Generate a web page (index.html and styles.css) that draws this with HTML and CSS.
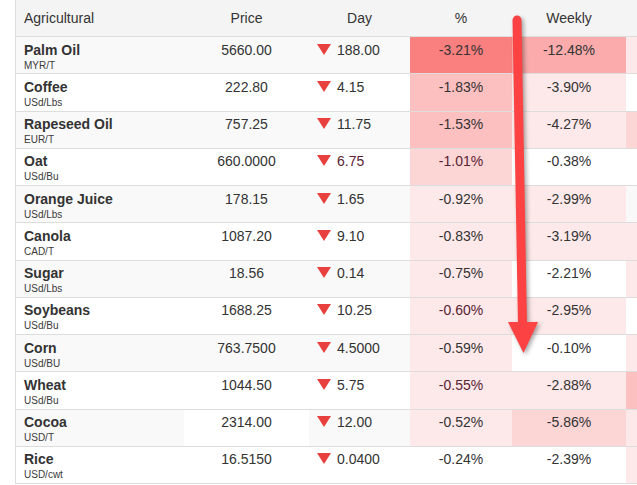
FILE: index.html
```html
<!DOCTYPE html>
<html lang="en">
<head>
<meta charset="utf-8">
<title>Agricultural</title>
<link rel="stylesheet" href="styles.css">
</head>
<body>
<div class="page">
  <div class="wrap">
    <table class="quotes">
      <colgroup>
        <col class="c-name"><col class="c-price"><col class="c-day"><col class="c-pct"><col class="c-week"><col class="c-month">
      </colgroup>
      <thead>
        <tr><th class="name">Agricultural</th><th>Price</th><th>Day</th><th>%</th><th>Weekly</th><th></th></tr>
      </thead>
      <tbody>
        <tr class="odd"><td class="name"><b>Palm Oil</b><span class="unit">MYR/T</span></td><td class="num">5660.00</td><td class="day"><i class="down"></i>188.00</td><td class="num h1">-3.21%</td><td class="num h2">-12.48%</td><td class="h5"></td></tr>
        <tr><td class="name"><b>Coffee</b><span class="unit">USd/Lbs</span></td><td class="num">222.80</td><td class="day"><i class="down"></i>4.15</td><td class="num h3">-1.83%</td><td class="num h5">-3.90%</td><td></td></tr>
        <tr class="odd"><td class="name"><b>Rapeseed Oil</b><span class="unit">EUR/T</span></td><td class="num">757.25</td><td class="day"><i class="down"></i>11.75</td><td class="num h3">-1.53%</td><td class="num h5">-4.27%</td><td class="h4"></td></tr>
        <tr><td class="name"><b>Oat</b><span class="unit">USd/Bu</span></td><td class="num">660.0000</td><td class="day dk"><i class="down"></i>6.75</td><td class="num h4 dk">-1.01%</td><td class="num">-0.38%</td><td></td></tr>
        <tr class="odd"><td class="name"><b>Orange Juice</b><span class="unit">USd/Lbs</span></td><td class="num">178.15</td><td class="day"><i class="down"></i>1.65</td><td class="num h5">-0.92%</td><td class="num h5">-2.99%</td><td></td></tr>
        <tr><td class="name"><b>Canola</b><span class="unit">CAD/T</span></td><td class="num">1087.20</td><td class="day"><i class="down"></i>9.10</td><td class="num h5">-0.83%</td><td class="num h5">-3.19%</td><td class="h5"></td></tr>
        <tr class="odd"><td class="name"><b>Sugar</b><span class="unit">USd/Lbs</span></td><td class="num">18.56</td><td class="day"><i class="down"></i>0.14</td><td class="num h5">-0.75%</td><td class="num plain">-2.21%</td><td class="h5"></td></tr>
        <tr><td class="name"><b>Soybeans</b><span class="unit">USd/Bu</span></td><td class="num">1688.25</td><td class="day"><i class="down"></i>10.25</td><td class="num h5 dk">-0.60%</td><td class="num h5">-2.95%</td><td></td></tr>
        <tr class="odd"><td class="name"><b>Corn</b><span class="unit">USd/BU</span></td><td class="num">763.7500</td><td class="day"><i class="down"></i>4.5000</td><td class="num h5">-0.59%</td><td class="num plain">-0.10%</td><td class="h5"></td></tr>
        <tr><td class="name"><b>Wheat</b><span class="unit">USd/Bu</span></td><td class="num">1044.50</td><td class="day"><i class="down"></i>5.75</td><td class="num h5 dk">-0.55%</td><td class="num h5">-2.88%</td><td class="h3"></td></tr>
        <tr class="odd"><td class="name"><b>Cocoa</b><span class="unit">USD/T</span></td><td class="num plain">2314.00</td><td class="day"><i class="down"></i>12.00</td><td class="num h5">-0.52%</td><td class="num h4">-5.86%</td><td class="h5"></td></tr>
        <tr><td class="name"><b>Rice</b><span class="unit">USD/cwt</span></td><td class="num">16.5150</td><td class="day"><i class="down"></i>0.0400</td><td class="num">-0.24%</td><td class="num">-2.39%</td><td class="h5"></td></tr>
      </tbody>
    </table>
  </div>
  <svg class="annot" width="637" height="485" viewBox="0 0 637 485" aria-hidden="true">
    <line x1="517" y1="20" x2="522.5" y2="324" stroke="#fc4242" stroke-width="9" stroke-linecap="round"/>
    <polygon points="508,322 538,322 523.5,353" fill="#fc4242"/>
  </svg>
</div>
</body>
</html>
```
FILE: styles.css
```css
html, body {
  margin: 0;
  padding: 0;
  background: #fff;
}
body {
  font-family: "Liberation Sans", Arial, sans-serif;
  color: #333;
  overflow: hidden;
}
.page {
  position: relative;
  width: 637px;
  height: 485px;
  overflow: hidden;
}
.wrap {
  margin-left: 15px;
  overflow: hidden;
}
.quotes {
  border-collapse: separate;
  border-spacing: 0;
  table-layout: fixed;
  width: 725px;
  border-left: 1px solid #ddd;
}
.c-name { width: 168px; }
.c-price { width: 125px; }
.c-day { width: 101px; }
.c-pct { width: 102px; }
.c-week { width: 114px; }
.c-month { width: 115px; }

.quotes thead tr { height: 37px; }
.quotes th {
  background: #f4f4f4;
  font-weight: normal;
  font-size: 14px;
  line-height: 17px;
  padding: 0 8px;
  text-align: center;
  vertical-align: middle;
  border-bottom: 1px solid #ddd;
  color: #333;
  white-space: nowrap;
}
.quotes th.name { text-align: left; }

.quotes tbody tr { height: 37.25px; }
.quotes td {
  padding: 4.5px 8px 0;
  vertical-align: top;
  font-size: 14px;
  line-height: 17px;
  border-bottom: 1px solid #ddd;
  white-space: nowrap;
  overflow: hidden;
}
.quotes tr.odd td { background: #f9f9f9; }

.name b {
  display: block;
  font-weight: bold;
  color: #333;
}
.unit {
  display: block;
  font-size: 10px;
  line-height: 13px;
  color: #3a3a3a;
}
.num { text-align: center; }
.day { text-align: left; }
.down {
  display: inline-block;
  width: 0;
  height: 0;
  border-left: 7px solid transparent;
  border-right: 7px solid transparent;
  border-top: 11px solid #e8403f;
  margin-right: 6px;
}
.dk { color: #5a2233; }

.quotes tr td.plain { background: #fff; }
.quotes tr td.h1 { background: #fa8080; }
.quotes tr td.h2 { background: #fbabab; }
.quotes tr td.h3 { background: #fcc0c0; }
.quotes tr td.h4 { background: #fcd5d5; }
.quotes tr td.h5 { background: #fde9e9; }

.annot {
  position: absolute;
  top: 0;
  left: 0;
  pointer-events: none;
  filter: drop-shadow(2px 2px 2px rgba(0, 0, 0, 0.35));
}
```
